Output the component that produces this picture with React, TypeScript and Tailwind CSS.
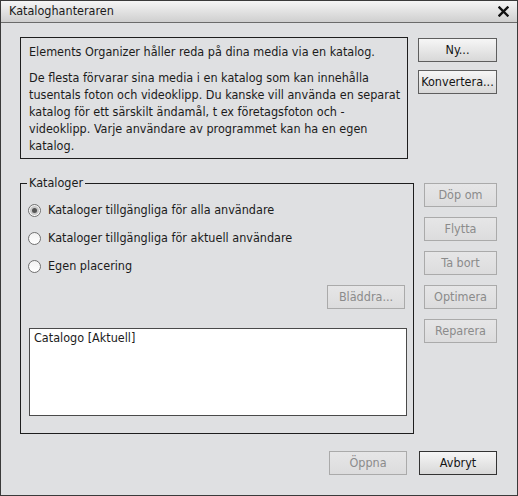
import React from "react";

const font = "font-['DejaVu_Sans_Condensed','DejaVu_Sans','Liberation_Sans',sans-serif]";

function Btn({ label, disabled, strong, w }: { label: string; disabled?: boolean; strong?: boolean; w: string }) {
  const base = "h-[24px] flex items-center justify-center leading-none border";
  if (disabled) {
    return (
      <div className={`${base} ${w} border-[#aaaaaa] bg-gradient-to-b from-[#e6e6e7] to-[#dcdcdd] text-[#8b8b8b]`}>{label}</div>
    );
  }
  return (
    <div
      className={`${base} ${w} ${strong ? "border-[#333333]" : "border-[#5e5e5e]"} bg-gradient-to-b from-[#f6f6f6] to-[#d8d8d8] text-[#141414]`}
    >
      {label}
    </div>
  );
}

function Radio({ label, checked }: { label: string; checked?: boolean }) {
  return (
    <div className="h-[16px] flex items-center gap-[7px]">
      <div className="w-[13px] h-[13px] rounded-full border border-[#707070] bg-gradient-to-b from-[#f2f2f2] to-[#ffffff] flex items-center justify-center">
        {checked && (
          <div className="w-[9px] h-[9px] rounded-full bg-[#c9c9c9] flex items-center justify-center">
            <div className="w-[5px] h-[5px] rounded-full bg-[#555555]" />
          </div>
        )}
      </div>
      <span>{label}</span>
    </div>
  );
}

export default function App() {
  return (
    <div
      className={`w-[518px] h-[496px] bg-[#dfe0e2] border border-[#3a3a3a] flex flex-col ${font} text-[12.5px] text-[#1b1b1b]`}
    >
      <div className="h-[22px] shrink-0 border-b border-[#6a6a6a] bg-gradient-to-b from-[#f5f5f5] to-[#cfcfcf] flex items-center justify-between pl-[8px] pr-[7px]">
        <span className="text-[#1a1a1a]">Kataloghanteraren</span>
        <svg width="11" height="11" viewBox="0 0 11 11" className="mr-[1px]">
          <path d="M1.5 1.5 L9.5 9.5 M9.5 1.5 L1.5 9.5" stroke="#111" strokeWidth="2.4" strokeLinecap="square" />
        </svg>
      </div>

      <div className="flex-1 flex flex-col pl-[19px] pr-[20px] pt-[14px]">
        <div className="flex gap-[10px]">
          <div className="w-[388px] h-[122px] border border-[#1e1e1e] pl-[8px] pr-[6px] pt-[5px] leading-[17px] flex flex-col gap-[9px]">
            <p>Elements Organizer håller reda på dina media via en katalog.</p>
            <p>
              De flesta förvarar sina media i en katalog som kan innehålla tusentals foton och videoklipp. Du kanske vill
              använda en separat katalog för ett särskilt ändamål, t ex företagsfoton och - videoklipp. Varje användare av
              programmet kan ha en egen katalog.
            </p>
          </div>
          <div className="flex flex-col gap-[8px] mt-[1px]">
            <Btn label="Ny..." w="w-[79px]" />
            <Btn label="Konvertera..." w="w-[79px]" />
          </div>
        </div>

        <div className="flex gap-[10px] mt-[24px]">
          <div className="relative w-[394px] h-[251px] border border-[#1e1e1e] flex flex-col pl-[7px] pr-[6px] pt-[18px]">
            <span className="absolute left-[6px] top-[-9px] px-[2px] bg-[#dfe0e2] leading-[16px]">Kataloger</span>
            <div className="flex flex-col gap-[12px]">
              <Radio label="Kataloger tillgängliga för alla användare" checked />
              <Radio label="Kataloger tillgängliga för aktuell användare" />
              <Radio label="Egen placering" />
            </div>
            <div className="flex justify-end mt-[11px] pr-[2px]">
              <Btn label="Bläddra..." disabled w="w-[78px]" />
            </div>
            <div className="mt-[19px] ml-[1px] w-[378px] h-[88px] bg-white border border-[#4a4a4a] pl-[4px] pt-[1px] leading-[16px]">
              Catalogo [Aktuell]
            </div>
          </div>
          <div className="flex flex-col gap-[10px]">
            <Btn label="Döp om" disabled w="w-[73px]" />
            <Btn label="Flytta" disabled w="w-[73px]" />
            <Btn label="Ta bort" disabled w="w-[73px]" />
            <Btn label="Optimera" disabled w="w-[73px]" />
            <Btn label="Reparera" disabled w="w-[73px]" />
          </div>
        </div>

        <div className="flex justify-end gap-[12px] mt-[17px]">
          <Btn label="Öppna" disabled w="w-[78px]" />
          <Btn label="Avbryt" strong w="w-[78px]" />
        </div>
      </div>
    </div>
  );
}
